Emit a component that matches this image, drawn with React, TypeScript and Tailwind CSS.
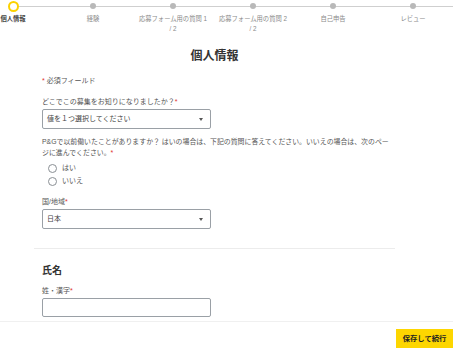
import React from "react";

const steps: { label: string; line2?: string }[] = [
  { label: "個人情報" },
  { label: "経験" },
  { label: "応募フォーム用の質問 1", line2: "/ 2" },
  { label: "応募フォーム用の質問 2", line2: "/ 2" },
  { label: "自己申告" },
  { label: "レビュー" },
];

function Req() {
  return <span className="text-[#e0332f]">*</span>;
}

function Select({ text }: { text: string }) {
  return (
    <div className="mt-[2px] flex h-[20px] w-[169px] items-center justify-between rounded-[2px] border border-[#9aa0a6] pl-[4px] pr-[7px] text-[7px] text-[#444]">
      <span>{text}</span>
      <span className="h-0 w-0 border-l-[2.5px] border-r-[2.5px] border-t-[3px] border-l-transparent border-r-transparent border-t-[#555]" />
    </div>
  );
}

function Radio({ label }: { label: string }) {
  return (
    <div className="flex h-[13px] items-center pl-[6px]">
      <span className="h-[9px] w-[9px] rounded-full border border-[#8a8f94] bg-white" />
      <span className="ml-[5px] text-[7px] text-[#555]">{label}</span>
    </div>
  );
}

export default function App() {
  return (
    <div
      className="h-[348px] w-[453px] overflow-hidden bg-white"
      style={{ fontFamily: '"Liberation Sans", "Noto Sans CJK JP", sans-serif' }}
    >
      {/* stepper */}
      <div className="relative h-[34px]">
        <div className="absolute left-[13px] right-0 top-[6px] h-px bg-[#cfcfcf]" />
        <div className="relative ml-[-27px] flex">
          {steps.map((s, i) => (
            <div key={i} className="flex w-[80px] flex-col items-center">
              <div className="flex h-[12px] items-center justify-center">
                {i === 0 ? (
                  <span className="box-border h-[11px] w-[11px] rounded-full border-[2.5px] border-[#fcd200] bg-white" />
                ) : (
                  <span className="h-[6px] w-[6px] rounded-full bg-[#b9b9b9]" />
                )}
              </div>
              <div
                className={`mt-[2px] text-center text-[6.3px] leading-[10px] ${
                  i === 0 ? "font-bold text-[#444]" : "text-[#8a8a8a]"
                }`}
              >
                <div>{s.label}</div>
                {s.line2 && <div>{s.line2}</div>}
              </div>
            </div>
          ))}
        </div>
      </div>

      {/* form */}
      <div className="ml-[34px] w-[361px]">
        <h1 className="mt-[14px] text-center text-[12px] font-bold leading-[16px] text-[#333]">個人情報</h1>
        <div className="px-[8px]">
          <div className="mt-[12px] text-[7px] leading-[10px] text-[#555]">
            <Req /> 必須フィールド
          </div>
          <div className="mt-[11px] text-[7px] leading-[10px] text-[#555]">
            どこでこの募集をお知りになりましたか？<Req />
          </div>
          <Select text="値を１つ選択してください" />
          <div className="mr-[-8px] mt-[7px] text-[6.9px] leading-[11px] text-[#555]">
            P&amp;Gで以前働いたことがありますか？ はいの場合は、下記の質問に答えてください。いいえの場合は、次のページに進んでください。<Req />
          </div>
          <div className="mt-[4px]">
            <Radio label="はい" />
            <Radio label="いいえ" />
          </div>
          <div className="mt-[9px] text-[7px] leading-[10px] text-[#555]">
            国/地域<Req />
          </div>
          <Select text="日本" />
        </div>
        <div className="mt-[19px] h-px bg-[#ececec]" />
        <div className="px-[8px]">
          <h2 className="mt-[15px] text-[10px] font-bold leading-[14px] text-[#333]">氏名</h2>
          <div className="mt-[8px] text-[7px] leading-[10px] text-[#555]">
            姓・漢字<Req />
          </div>
          <div className="mt-[2px] h-[19px] w-[169px] rounded-[2px] border border-[#9aa0a6]" />
        </div>
      </div>

      {/* footer */}
      <div className="mt-[4px] flex justify-end border-t border-[#f0f0f0] pt-[7px]">
        <button className="flex h-[20px] w-[57px] items-center justify-center bg-[#fdd600] text-[7.3px] font-bold text-[#222]">
          保存して続行
        </button>
      </div>
    </div>
  );
}
